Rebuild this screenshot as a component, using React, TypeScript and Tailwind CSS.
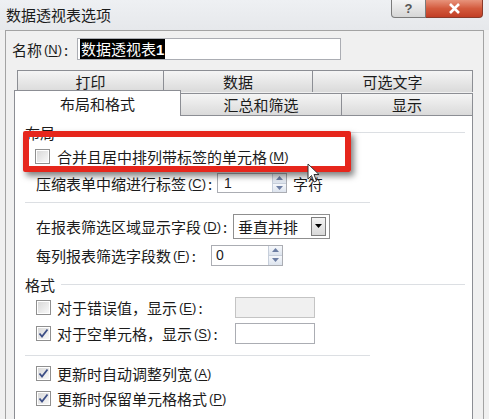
const font = "font-['Noto_Sans_CJK_SC','Liberation_Sans',sans-serif]";

function Key({ k }: { k: string }) {
  return (
    <span className="mx-[2px] font-['Liberation_Sans',sans-serif] text-[13px]">
      (<span className="underline underline-offset-2">{k}</span>)
    </span>
  );
}

function Check({ checked }: { checked?: boolean }) {
  return (
    <span className="flex h-[15px] w-[15px] shrink-0 items-center justify-center border border-[#8f8f8f] bg-white p-px">
      <span className="flex h-full w-full items-center justify-center bg-gradient-to-br from-[#d9d9d9] to-[#f8f8f8]">
        {checked && (
          <svg width="11" height="11" viewBox="0 0 11 11">
            <path d="M1.5 5.5 L4 8.5 L9.5 1.5" fill="none" stroke="#3d4f86" strokeWidth="1.8" />
          </svg>
        )}
      </span>
    </span>
  );
}

function Spin({ value, className }: { value: string; className: string }) {
  return (
    <div className={`flex items-stretch border border-[#abadb3] bg-white ${className}`}>
      <span className="flex flex-1 items-center font-['Liberation_Sans',sans-serif] text-[14px]">{value}</span>
      <div className="flex w-[14px] flex-col border-l border-[#c7cfdb]">
        <div className="flex flex-1 items-center justify-center bg-gradient-to-b from-[#f6f8fb] to-[#dde4ee]">
          <svg width="7" height="4" viewBox="0 0 7 4">
            <path d="M0 4 L3.5 0 L7 4Z" fill="#6d7ea3" />
          </svg>
        </div>
        <div className="flex flex-1 items-center justify-center border-t border-[#c7cfdb] bg-gradient-to-b from-[#f6f8fb] to-[#dde4ee]">
          <svg width="7" height="4" viewBox="0 0 7 4">
            <path d="M0 0 L7 0 L3.5 4Z" fill="#6d7ea3" />
          </svg>
        </div>
      </div>
    </div>
  );
}

function Header({ text, className }: { text: string; className: string }) {
  return (
    <div className={`flex h-[18px] items-center pl-[10px] pr-[7px] ${className}`}>
      <span>{text}</span>
      <div className="ml-[6px] h-px flex-1 bg-[#dcdfe3]" />
    </div>
  );
}

function Separator({ className }: { className: string }) {
  return (
    <div className={`flex items-center pl-[10px] ${className}`}>
      <div className="h-px w-[345px] bg-[#dcdfe3]" />
    </div>
  );
}

const backTabs = [
  { label: "打印", w: "w-[147px]" },
  { label: "数据", w: "w-[150px] -ml-px" },
  { label: "可选文字", w: "w-[161px] -ml-px" },
];

export default function App() {
  return (
    <div className={`flex h-[419px] w-[489px] flex-col overflow-hidden bg-[#f0f0f0] text-[15px] leading-none text-[#1b1b1b] ${font}`}>
      <div className="flex h-[30px] shrink-0 justify-between bg-gradient-to-b from-[#eef0f3] to-[#e6e8eb]">
        <span className="pl-[6px] pt-[7px]">数据透视表选项</span>
        <div className="mr-[6px] flex h-[18px]">
          <div className="flex w-[35px] items-center justify-center rounded-bl-[4px] border border-t-0 border-[#7b7b7b] bg-gradient-to-b from-[#f4f4f4] to-[#d6d6d6] font-['Liberation_Sans',sans-serif] text-[13px] font-bold text-[#555]">
            ?
          </div>
          <div className="flex w-[57px] items-center justify-center rounded-br-[4px] border border-l-0 border-t-0 border-[#8a3a2a] bg-gradient-to-b from-[#e7937b] via-[#d35a3d] to-[#c23e25]">
            <svg width="13" height="11" viewBox="0 0 13 11">
              <path d="M2 1 L11 10 M11 1 L2 10" stroke="#fff" strokeWidth="2.6" />
            </svg>
          </div>
        </div>
      </div>

      <div className="mx-[5px] flex flex-1 flex-col border border-b-0 border-[#a3a3a3]">
        <div className="mt-[7px] flex h-[22px] items-center pl-[6px]">
          <span className="flex w-[65px] items-center">
            名称<Key k="N" />:
          </span>
          <div className="flex h-[22px] w-[264px] items-center border border-[#abadb3] bg-white pl-[2px]">
            <span className="bg-black px-px py-[2px] text-white">
              数据透视表<span className="font-['Liberation_Sans',sans-serif] font-bold">1</span>
            </span>
          </div>
        </div>

        <div className="ml-[11px] mt-[10px] flex h-[22px]">
          {backTabs.map((t) => (
            <div
              key={t.label}
              className={`flex items-center justify-center border border-b-0 border-[#8c8e94] bg-gradient-to-b from-[#f5f5f5] to-[#dadada] ${t.w}`}
            >
              {t.label}
            </div>
          ))}
        </div>

        <div className="ml-[8px] -mt-[2px] flex h-[25px] items-end">
          <div className="relative z-10 -mb-px flex h-[26px] w-[167px] items-center justify-center border border-b-0 border-[#8c8e94] bg-white">
            布局和格式
          </div>
          <div className="-ml-px flex h-[22px] w-[162px] items-center justify-center border border-b-0 border-[#8c8e94] bg-gradient-to-b from-[#f5f5f5] to-[#dadada]">
            汇总和筛选
          </div>
          <div className="-ml-px flex h-[22px] w-[132px] items-center justify-center border border-b-0 border-[#8c8e94] bg-gradient-to-b from-[#f5f5f5] to-[#dadada]">
            显示
          </div>
        </div>

        <div className="relative ml-[8px] flex w-[459px] flex-1 flex-col border border-b-0 border-[#8c8e94] bg-white">
          <Header text="布局" className="mt-[7px]" />

          <div className="mt-[3px] flex h-[24px] items-center pl-[20px]">
            <Check />
            <span className="ml-[7px] flex items-center">
              合并且居中排列带标签的单元格<Key k="M" />
            </span>
          </div>

          <div className="flex h-[30px] items-center pl-[21px]">
            <span className="flex w-[181px] items-center">
              压缩表单中缩进行标签<Key k="C" />:
            </span>
            <Spin value="1" className="h-[20px] w-[70px] pl-[6px]" />
            <span className="ml-[6px]">字符</span>
          </div>

          <Separator className="h-[8px]" />

          <div className="mt-[6px] flex h-[28px] items-center pl-[21px]">
            <span className="flex w-[197px] items-center">
              在报表筛选区域显示字段<Key k="D" />:
            </span>
            <div className="flex h-[25px] w-[97px] items-center border border-[#8f8f8f] bg-white pl-[4px] pr-[3px]">
              <span className="flex-1">垂直并排</span>
              <div className="flex h-[19px] w-[15px] items-center justify-center border border-[#7d7d7d] bg-gradient-to-b from-[#f4f4f4] to-[#d9d9d9]">
                <svg width="7" height="4" viewBox="0 0 7 4">
                  <path d="M0 0 L7 0 L3.5 4Z" fill="#000" />
                </svg>
              </div>
            </div>
          </div>

          <div className="flex h-[30px] items-center pl-[21px]">
            <span className="flex w-[175px] items-center">
              每列报表筛选字段数<Key k="F" />:
            </span>
            <Spin value="0" className="h-[21px] w-[72px] pl-[4px]" />
          </div>

          <Header text="格式" className="mt-[5px]" />

          <div className="flex h-[28px] items-center pl-[21px]">
            <div className="flex w-[199px] items-center">
              <Check />
              <span className="ml-[6px] flex items-center">
                对于错误值，显示<Key k="E" />:
              </span>
            </div>
            <div className="h-[21px] w-[80px] border border-[#c4c4c4] bg-[#f0f0f0]" />
          </div>

          <div className="flex h-[24px] items-center pl-[21px]">
            <div className="flex w-[199px] items-center">
              <Check checked />
              <span className="ml-[6px] flex items-center">
                对于空单元格，显示<Key k="S" />:
              </span>
            </div>
            <div className="h-[21px] w-[80px] border border-[#abadb3] bg-white" />
          </div>

          <Separator className="h-[20px]" />

          <div className="flex h-[16px] items-center pl-[21px]">
            <Check checked />
            <span className="ml-[6px] flex items-center">
              更新时自动调整列宽<Key k="A" />
            </span>
          </div>

          <div className="mt-[5px] flex h-[24px] items-center pl-[21px]">
            <Check checked />
            <span className="ml-[6px] flex items-center">
              更新时保留单元格格式<Key k="P" />
            </span>
          </div>

          <div className="absolute left-[8px] top-[15px] h-[41px] w-[328px] rounded-[2px] border-[6px] border-[#e6261c] shadow-[3px_4px_6px_rgba(0,0,0,0.5)]" />

          <svg className="absolute left-[292px] top-[47px]" width="13" height="21" viewBox="0 0 13 21">
            <path d="M1 1 L1 16 L4.5 12.5 L7 19 L9.5 18 L7 11.5 L12 11.5 Z" fill="#fff" stroke="#333" strokeWidth="1" />
          </svg>
        </div>
      </div>
    </div>
  );
}
